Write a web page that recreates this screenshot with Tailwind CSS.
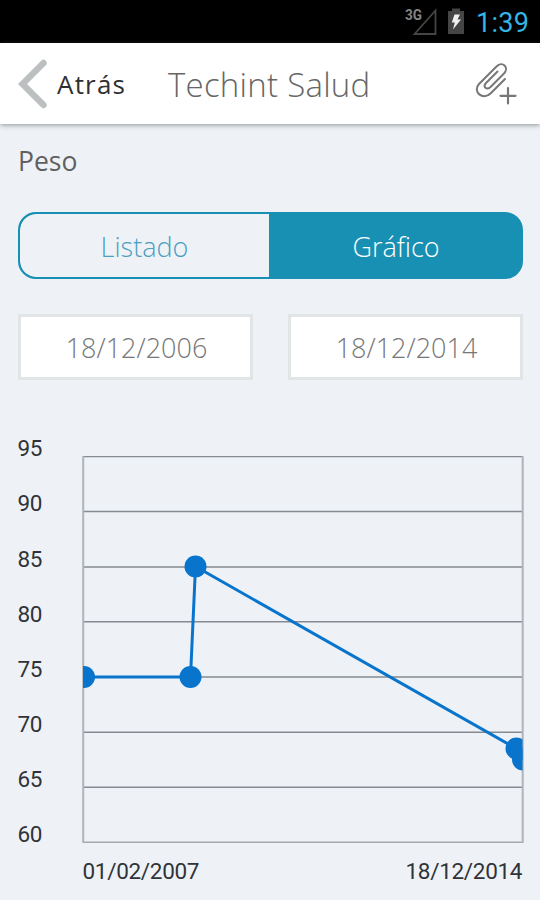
<!DOCTYPE html>
<html lang="es">
<head>
<meta charset="utf-8">
<title>Techint Salud</title>
<script src="https://cdn.jsdelivr.net/npm/@tailwindcss/browser@4"></script>
</head>
<body class="w-[540px] h-[900px] overflow-hidden bg-[#eef2f7] font-['Open_Sans',sans-serif] flex flex-col">
  <div class="h-[43px] shrink-0 bg-black flex items-center justify-end pr-[11px]">
    <svg class="w-[64px] h-[43px] mr-[8px]" viewBox="404 0 64 43">
      <text x="405" y="19.500" font-family="Roboto, sans-serif" font-weight="700" font-size="14" fill="#858585" textLength="17" lengthAdjust="spacingAndGlyphs">3G</text>
      <path d="M414.500 34H435.500V10.500Z" fill="none" stroke="#454545" stroke-width="1.800"/>
      <path d="M448 11H452V8.500H460V11H464V34H448Z" fill="#454545"/>
      <path d="M454.500 14.500H460L457.500 19.500H461L453 29.500L454.800 22.500H451.800Z" fill="#f0f0f0"/>
    </svg>
    <span class="font-['Roboto',sans-serif] text-[27px] leading-[43px] tracking-[0.3px] text-[#33b5e5] w-[53px] whitespace-nowrap pt-[4px]">1:39</span>
  </div>
  <header class="h-[81px] shrink-0 bg-white flex items-center relative shadow-[0_1px_5px_rgba(60,70,75,0.55)] pl-[18px] pr-[22px]">
    <svg class="w-[30px] h-[50px]" viewBox="18 59 30 50"><path d="M43.500 63L22.500 84L43.500 105" fill="none" stroke="#bcc0c0" stroke-width="6.500" stroke-linecap="round"/></svg>
    <span class="ml-[9px] w-[111px] text-[26px] leading-[34px] tracking-[1.200px] text-[#303030] whitespace-nowrap">Atrás</span>
    <h1 class="text-[33px] leading-[44px] pt-[2px] tracking-[0.25px] font-light text-[#666] whitespace-nowrap">Techint Salud</h1>
    <svg class="w-[44px] h-[46px] ml-auto" viewBox="474 61 44 46" fill="none" stroke="#777" stroke-width="2" stroke-linecap="round" stroke-linejoin="round">
      <path d="M505 79L490.500 93.500C483 101 472 91.500 479 84L496.500 66.500C502.500 60.500 509.500 67.500 504 73.500L490.500 87C486.500 90.500 482.500 87 486 83L497.500 71.500"/>
      <path d="M500.500 95.800H515.500M508 88V103.500" stroke-width="2.200"/>
    </svg>
  </header>
  <main class="flex-1 flex flex-col px-[18px]">
    <h2 class="mt-[19px] h-[36px] text-[26.500px] leading-[36px] text-[#606060]">Peso</h2>
    <div class="mt-[33px] h-[67px] flex rounded-[18px] border-2 border-[#1890b3] bg-[#1890b3] overflow-hidden text-[27px] leading-[66px] font-light text-center w-[505px]">
      <div class="w-[249px] rounded-l-[16px] bg-[#eef2f7] text-[#4b9fbf]"><span>Listado</span></div>
      <div class="flex-1 text-white pl-[2px]"><span>Gráfico</span></div>
    </div>
    <div class="mt-[35px] flex justify-between w-[505px] text-[27px] font-light text-[#777] text-center leading-[62px]">
      <div class="w-[235px] h-[66px] bg-white border-3 border-[#e2e5e6] pl-[2px]">18/12/2006</div>
      <div class="w-[235px] h-[66px] bg-white border-3 border-[#e2e5e6] pl-[2px]">18/12/2014</div>
    </div>
    <svg class="w-[522px] h-[470px] mt-[50px]" viewBox="18 430 522 470" font-family="Roboto, sans-serif" font-size="22.500" fill="#303338">
      <defs><clipPath id="plot"><rect x="83" y="450" width="439.500" height="400"/></clipPath></defs>
      <g stroke="#858a90" stroke-width="1.400">
        <path d="M83 456.600H523M83 511.500H523M83 567H523M83 621.700H523M83 677H523M83 732.300H523M83 787.300H523"/>
        <path d="M83 842.300H523" stroke="#a5a8ac"/>
        <path d="M83.200 456V843M522.700 456V843" stroke="#b0b4b8" stroke-width="2"/>
      </g>
      <g clip-path="url(#plot)">
        <path d="M83 677H190.500L195.500 566.500L516 748.500L523 760" fill="none" stroke="#0874cc" stroke-width="3"/>
        <g fill="#0874cc"><circle cx="84" cy="677" r="11"/><circle cx="190.500" cy="677" r="11"/><circle cx="195.500" cy="566.500" r="11"/><circle cx="516.500" cy="748.500" r="11"/><circle cx="523" cy="759.500" r="11"/></g>
      </g>
      <text x="17.500" y="456" textLength="25">95</text>
      <text x="17.500" y="511.200" textLength="25">90</text>
      <text x="17.500" y="566.500" textLength="25">85</text>
      <text x="17.500" y="621.500" textLength="25">80</text>
      <text x="17.500" y="677" textLength="25">75</text>
      <text x="17.500" y="732" textLength="25">70</text>
      <text x="17.500" y="787" textLength="25">65</text>
      <text x="17.500" y="842" textLength="25">60</text>
      <text x="82.500" y="879" textLength="117">01/02/2007</text>
      <text x="405.500" y="879" textLength="117">18/12/2014</text>
    </svg>
  </main>
</body>
</html>
